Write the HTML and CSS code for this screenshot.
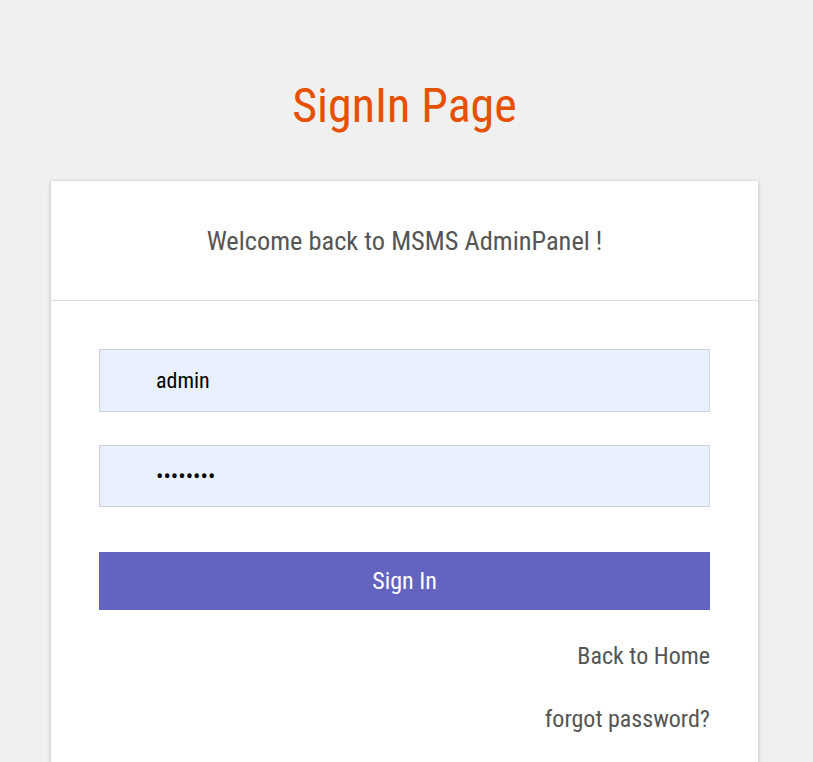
FILE: index.html
```html
<!DOCTYPE html>
<html>
<head>
<meta charset="utf-8">
<link rel="stylesheet" href="styles.css">
</head>
<body>
<h1 class="title">SignIn Page</h1>
<div class="card">
  <div class="card-head">Welcome back to MSMS AdminPanel !</div>
  <form class="card-body">
    <input class="field" type="text" value="admin">
    <input class="field" type="password" value="12345678">
    <button class="btn" type="button">Sign In</button>
    <a class="link" href="#">Back to Home</a>
    <a class="link" href="#">forgot password?</a>
  </form>
</div>
</body>
</html>
```
FILE: styles.css
```css
html, body { margin: 0; padding: 0; }
body {
  background: #f0f0f0;
  font-family: "Roboto Condensed", Roboto, "Liberation Sans", sans-serif;
  font-stretch: condensed;
  overflow: hidden;
}
.title {
  margin: 0 0 49px;
  padding: 80px 4px 0 0;
  text-align: center;
  font-weight: 400;
  font-size: 48px;
  line-height: 52px;
  color: #e65100;
}
.card {
  width: 707px;
  margin: 0 0 0 51px;
  background: #fff;
  box-shadow: 0 1px 4px rgba(0,0,0,0.25);
}
.card-head {
  height: 119px;
  display: flex;
  align-items: center;
  justify-content: center;
  border-bottom: 1px solid #ddd;
  font-size: 26.4px;
  color: #555;
}
.card-body {
  display: flex;
  flex-direction: column;
  padding: 48px 48px 20px;
}
.field {
  height: 63px;
  box-sizing: border-box;
  border: 1px solid #cfd3d8;
  background: #e8f0fe;
  padding: 0 0 0 56px;
  font-family: inherit;
  font-stretch: condensed;
  font-size: 22px;
  color: #000;
  margin-bottom: 33px;
  outline: none;
}
.field + .field { height: 62px; margin-bottom: 45px; }
.btn {
  height: 58px;
  border: 0;
  background: #6264c0;
  color: #fff;
  font-family: inherit;
  font-stretch: condensed;
  font-size: 24px;
  margin-bottom: 31px;
}
.link {
  align-self: flex-end;
  text-decoration: none;
  color: #555;
  font-size: 24px;
  line-height: 30px;
  margin-bottom: 33px;
}
```
